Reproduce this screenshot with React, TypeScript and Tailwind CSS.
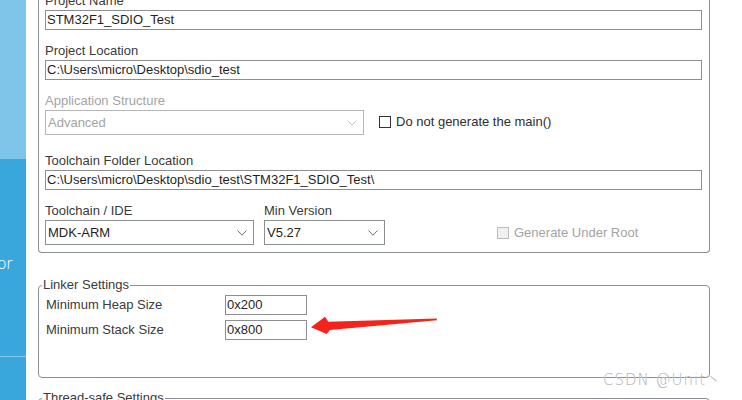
import React from 'react';

const font = "font-['Liberation_Sans',Arial,sans-serif]";

function Chevron({ disabled }: { disabled?: boolean }) {
  return (
    <svg width="10" height="6" viewBox="0 0 10 6" className="shrink-0">
      <polyline
        points="0.5,0.5 5,5.2 9.5,0.5"
        fill="none"
        stroke={disabled ? '#c6c6c6' : '#707070'}
        strokeWidth="1"
      />
    </svg>
  );
}

function Label({ text, disabled }: { text: string; disabled?: boolean }) {
  return (
    <div className={`h-[16px] text-[13px] leading-[18px] whitespace-nowrap ${disabled ? 'text-[#a3a3a3]' : 'text-[#3a3a3a]'}`}>
      {text}
    </div>
  );
}

function TextBox({ value }: { value: string }) {
  return (
    <div className="mt-[2px] flex h-[20px] items-center border border-[#8b8e93] bg-white pl-[1px] text-[13px] leading-[16px] text-[#1f1f1f] whitespace-nowrap">
      {value}
    </div>
  );
}

function Select({ value, width, disabled }: { value: string; width: string; disabled?: boolean }) {
  return (
    <div
      className={`mt-[2px] flex h-[25px] items-center justify-between border bg-white pl-[2px] pr-[6px] text-[13px] leading-[16px] ${width} ${
        disabled ? 'border-[#b4b6b9] text-[#a3a3a3]' : 'border-[#8b8e93] text-[#1f1f1f]'
      }`}
    >
      <span>{value}</span>
      <Chevron disabled={disabled} />
    </div>
  );
}

function Check({ label, disabled }: { label: string; disabled?: boolean }) {
  return (
    <div className="flex items-center gap-[5px] text-[13px] leading-[16px]">
      <div
        className={`h-[12px] w-[12px] border ${
          disabled ? 'border-[#bcbcbc] bg-[#f0f0f0]' : 'border-[#333] bg-white'
        }`}
      />
      <span className={disabled ? 'text-[#a3a3a3]' : 'text-[#2e2e2e]'}>{label}</span>
    </div>
  );
}

export default function App() {
  return (
    <div className={`relative flex h-[400px] w-[742px] overflow-hidden bg-white ${font}`}>
      {/* left wizard strip */}
      <div className="flex w-[26px] shrink-0 flex-col">
        <div className="h-[159px] bg-[#7fc5e9]" />
        <div className="flex flex-1 flex-col bg-[#39a7db] pt-[94px]">
          <div className="-ml-[3px] h-[20px] whitespace-nowrap font-['Open_Sans',sans-serif] text-[16px] font-light leading-[20px] text-white">
            or
          </div>
          <div className="mt-[83px] h-[1px] bg-[#86c9ec]" />
        </div>
      </div>

      <div className="flex-1 pl-[12px]">
        {/* project group */}
        <div className="-mt-[8px] w-[672px] rounded-b-[4px] border-x border-b border-[#8b8e93] pb-[7px] pl-[6px] pr-[7px]">
          <Label text="Project Name" />
          <TextBox value="STM32F1_SDIO_Test" />

          <div className="mt-[12px]">
            <Label text="Project Location" />
            <TextBox value="C:\Users\micro\Desktop\sdio_test" />
          </div>

          <div className="mt-[12px]">
            <Label text="Application Structure" disabled />
            <div className="flex items-center">
              <Select value="Advanced" width="w-[319px]" disabled />
              <div className="ml-[15px] mt-[1px]">
                <Check label="Do not generate the main()" />
              </div>
            </div>
          </div>

          <div className="mt-[17px]">
            <Label text="Toolchain Folder Location" />
            <TextBox value="C:\Users\micro\Desktop\sdio_test\STM32F1_SDIO_Test\" />
          </div>

          <div className="mt-[12px] flex items-end">
            <div>
              <Label text="Toolchain / IDE" />
              <Select value="MDK-ARM" width="w-[209px]" />
            </div>
            <div className="ml-[10px]">
              <Label text="Min Version" />
              <Select value="V5.27" width="w-[121px]" />
            </div>
            <div className="ml-[112px] flex h-[25px] items-center">
              <Check label="Generate Under Root" disabled />
            </div>
          </div>
        </div>

        {/* linker settings */}
        <fieldset className="mt-[24px] w-[672px] rounded-[4px] border border-[#8b8e93] pb-[37px] pl-[7px] pt-[2px]">
          <legend className="-ml-[4px] px-[1px] text-[13px] leading-[16px] text-[#3a3a3a]">Linker Settings</legend>
          <div className="flex items-center">
            <div className="w-[179px] text-[13px] leading-[16px] text-[#3a3a3a]">Minimum Heap Size</div>
            <div className="flex h-[20px] w-[82px] items-center border border-[#8b8e93] pl-[1px] text-[13px] leading-[16px] text-[#1f1f1f]">
              0x200
            </div>
          </div>
          <div className="mt-[5px] flex items-center">
            <div className="w-[179px] text-[13px] leading-[16px] text-[#3a3a3a]">Minimum Stack Size</div>
            <div className="flex h-[20px] w-[82px] items-center border border-[#8b8e93] pl-[1px] text-[13px] leading-[16px] text-[#1f1f1f]">
              0x800
            </div>
          </div>
        </fieldset>

        {/* thread-safe settings, cut by the window */}
        <fieldset className="mt-[12px] h-[60px] w-[672px] rounded-[4px] border border-[#8b8e93] pl-[7px]">
          <legend className="-ml-[4px] px-[1px] text-[13px] leading-[16px] text-[#3a3a3a]">Thread-safe Settings</legend>
        </fieldset>
      </div>

      {/* red annotation arrow */}
      <svg className="absolute left-[300px] top-[310px]" width="145" height="30" viewBox="0 0 145 30">
        <polygon
          points="11,17.3 25,6.7 28.3,11.7 136.7,8.6 136.9,10.2 30,20 26.7,24"
          fill="#f6231c"
        />
      </svg>

      {/* watermark */}
      <div className="absolute left-[603px] top-[371px] whitespace-nowrap font-['DejaVu_Sans','Noto_Sans_CJK_SC',sans-serif] text-[15px] font-light leading-[18px] tracking-[1px] text-[#b2b2b2] [text-shadow:0_0_1px_#fff]">
        CSDN @Unit丶
      </div>
    </div>
  );
}
